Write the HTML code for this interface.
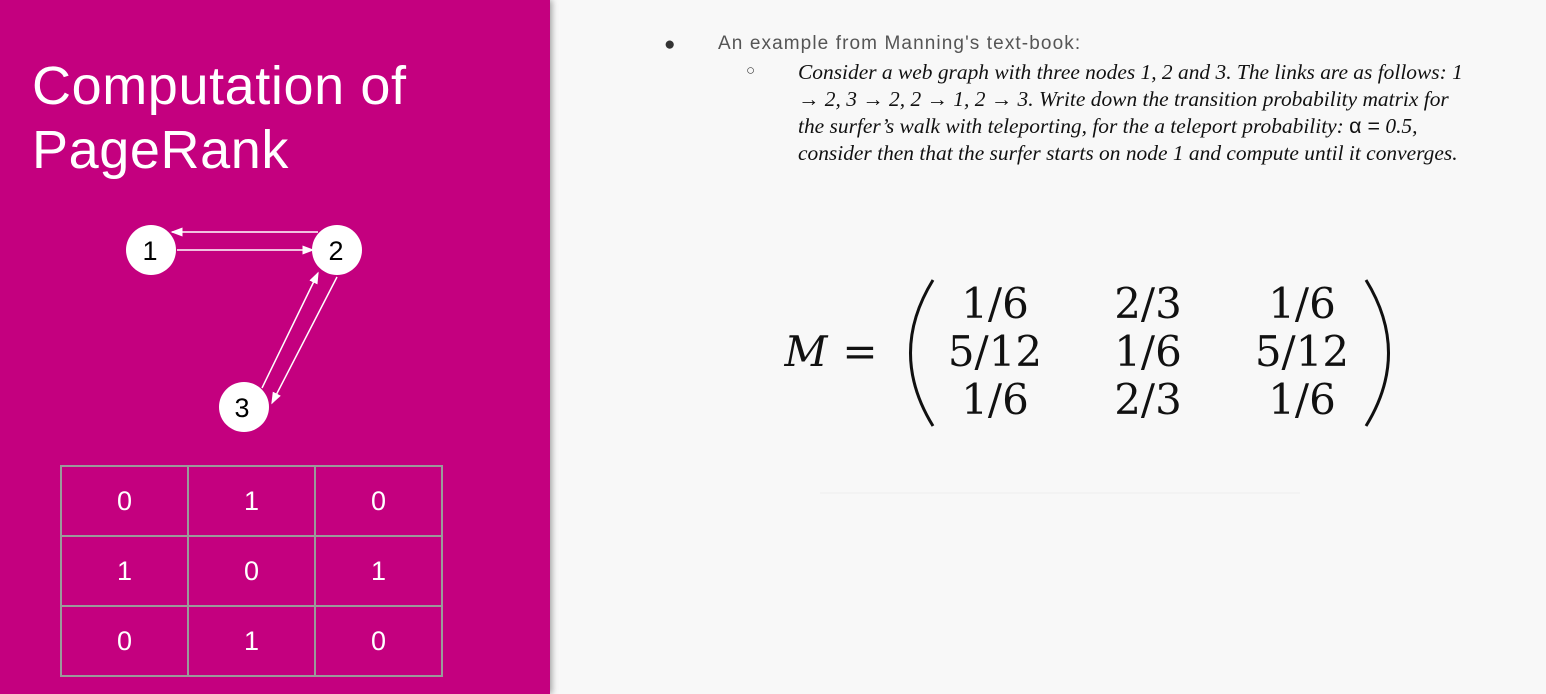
<!DOCTYPE html>
<html><head><meta charset="utf-8"><style>
body{margin:0;width:1546px;height:694px;overflow:hidden;background:#f8f8f8;position:relative;font-family:"Liberation Sans",sans-serif}
.left{position:absolute;left:0;top:0;width:550px;height:694px;background:#c4007f;box-shadow:2px 0 6px rgba(0,0,0,.35)}
.title{position:absolute;left:32px;top:54px;color:#fff;font-size:54px;line-height:64px;font-weight:300;letter-spacing:0.6px}
table{position:absolute;left:60px;top:465px;border-collapse:collapse}
td{width:125px;height:68px;border:2px solid #9a9a9a;color:#fff;font-size:27px;text-align:center;padding:0}
.t{position:absolute;white-space:nowrap}
.it{font-family:"Liberation Serif",serif;font-style:italic;font-size:21px;color:#111;transform-origin:0 0;transform:scaleX(1.02)}
</style></head><body>
<div class="left">
<div class="title">Computation of<br>PageRank</div>
<svg width="550" height="694" style="position:absolute;left:0;top:0">
<defs><marker id="a" markerWidth="8" markerHeight="8" refX="7" refY="4" orient="auto"><path d="M0,1 L8,4 L0,7z" fill="#fff"/></marker></defs>
<g stroke="#fff" stroke-width="1.5" fill="none">
<line x1="318" y1="232" x2="172" y2="232" marker-end="url(#a)"/>
<line x1="177" y1="250" x2="313" y2="250" marker-end="url(#a)"/>
<line x1="262" y1="388" x2="318" y2="273" marker-end="url(#a)"/>
<line x1="337" y1="277" x2="272" y2="403" marker-end="url(#a)"/>
</g>
<g fill="#fff"><circle cx="151" cy="250" r="25"/><circle cx="337" cy="250" r="25"/><circle cx="244" cy="407" r="25"/></g>
<g font-size="27" fill="#000" text-anchor="middle" font-family="Liberation Sans"><text x="150" y="260">1</text><text x="336" y="260">2</text><text x="242" y="417">3</text></g>
</svg>
<table><tr><td>0</td><td>1</td><td>0</td></tr><tr><td>1</td><td>0</td><td>1</td></tr><tr><td>0</td><td>1</td><td>0</td></tr></table>
</div>
<div class="t" style="left:664px;top:34px;font-size:19px;color:#333">●</div>
<div class="t" style="left:718px;top:33px;font-size:19px;color:#555;letter-spacing:1.1px">An example from Manning's text-book:</div>
<div class="t" style="left:746px;top:62px;font-size:15px;color:#444">○</div>
<div class="t it" style="left:798px;top:60px">Consider a web graph with three nodes 1, 2 and 3. The links are as follows: 1</div>
<div class="t it" style="left:798px;top:87px">→ 2, 3 → 2, 2 → 1, 2 → 3. Write down the transition probability matrix for</div>
<div class="t it" style="left:798px;top:114px">the surfer’s walk with teleporting, for the a teleport probability: <span style="font-style:normal;font-family:'Liberation Sans'">α =</span> 0.5,</div>
<div class="t it" style="left:798px;top:141px">consider then that the surfer starts on node 1 and compute until it converges.</div>
<svg width="1546" height="694" style="position:absolute;left:0;top:0">
<g font-family="DejaVu Serif,serif" font-size="42" fill="#111" text-anchor="middle">
<text x="806" y="366" font-style="italic">M</text>
<text x="860" y="366">=</text>
<text x="995" y="318">1/6</text><text x="1148" y="318">2/3</text><text x="1302" y="318">1/6</text>
<text x="995" y="366">5/12</text><text x="1148" y="366">1/6</text><text x="1302" y="366">5/12</text>
<text x="995" y="414">1/6</text><text x="1148" y="414">2/3</text><text x="1302" y="414">1/6</text>
</g>
<path d="M933,280 Q888,353 933,426" stroke="#111" stroke-width="3" fill="none"/>
<path d="M1366,280 Q1411,353 1366,426" stroke="#111" stroke-width="3" fill="none"/>
<line x1="820" y1="493" x2="1300" y2="493" stroke="#eee" stroke-width="1"/>
</svg>
</body></html>
